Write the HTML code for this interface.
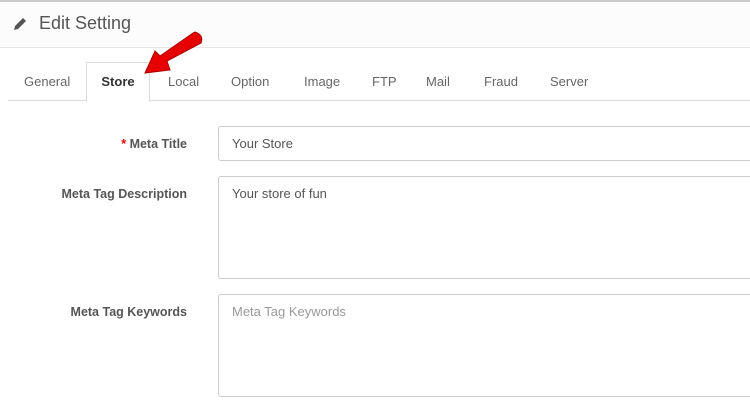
<!DOCTYPE html><html><head><style>
body{margin:0;width:750px;height:404px;overflow:hidden;background:#fff;font-family:"Liberation Sans",sans-serif;color:#666;position:relative}
.hd{position:absolute;top:0;left:0;width:750px;height:45px;background:#fcfcfc;border-top:2px solid #ccc;border-bottom:1px solid #e5e5e5}
.hd span{position:absolute;left:39px;top:11px;font-size:18px;color:#555}
.tabs{position:absolute;top:100px;left:8px;right:0;border-top:1px solid #ddd}
.tab{position:absolute;top:74px;font-size:13px;color:#666}
.act{position:absolute;left:86px;top:62px;width:62px;height:39px;border:1px solid #ddd;border-bottom:none;background:#fff;text-align:center;font-weight:bold;font-size:13px;color:#333;line-height:38px}
.lbl{position:absolute;right:563px;font-size:12.5px;font-weight:bold;color:#555}
.in{position:absolute;left:218px;width:540px;border:1px solid #ccc;border-radius:3px;font-size:13px;padding:9px 13px;box-sizing:border-box;color:#555}
</style></head><body>
<div class="hd"><svg style="position:absolute;left:13px;top:15px" width="14" height="14" viewBox="0 0 14 14"><path d="M1 13 L2 9 L10 1 L13 4 L5 12 Z" fill="#555"/></svg><span>Edit Setting</span></div>
<div class="tabs"></div>
<div class="act">Store</div>
<div class="tab" style="left:24px">General</div>
<div class="tab" style="left:168px">Local</div>
<div class="tab" style="left:231px">Option</div>
<div class="tab" style="left:304px">Image</div>
<div class="tab" style="left:372px">FTP</div>
<div class="tab" style="left:426px">Mail</div>
<div class="tab" style="left:484px">Fraud</div>
<div class="tab" style="left:550px">Server</div>
<svg style="position:absolute;left:0;top:0" width="750" height="404"><path d="M195 32 Q204 35 201 43 L167 61 L170 70 L145 73 L155 51 L160 56 L193 33 Z" fill="#e60000" stroke="#a00" stroke-width="1"/></svg>
<div class="lbl" style="top:137px"><span style="color:#e00">*</span> Meta Title</div>
<div class="in" style="top:126px;height:35px">Your Store</div>
<div class="lbl" style="top:187px">Meta Tag Description</div>
<div class="in" style="top:176px;height:103px">Your store of fun</div>
<div class="lbl" style="top:305px">Meta Tag Keywords</div>
<div class="in" style="top:294px;height:103px;color:#999">Meta Tag Keywords</div>
</body></html>
